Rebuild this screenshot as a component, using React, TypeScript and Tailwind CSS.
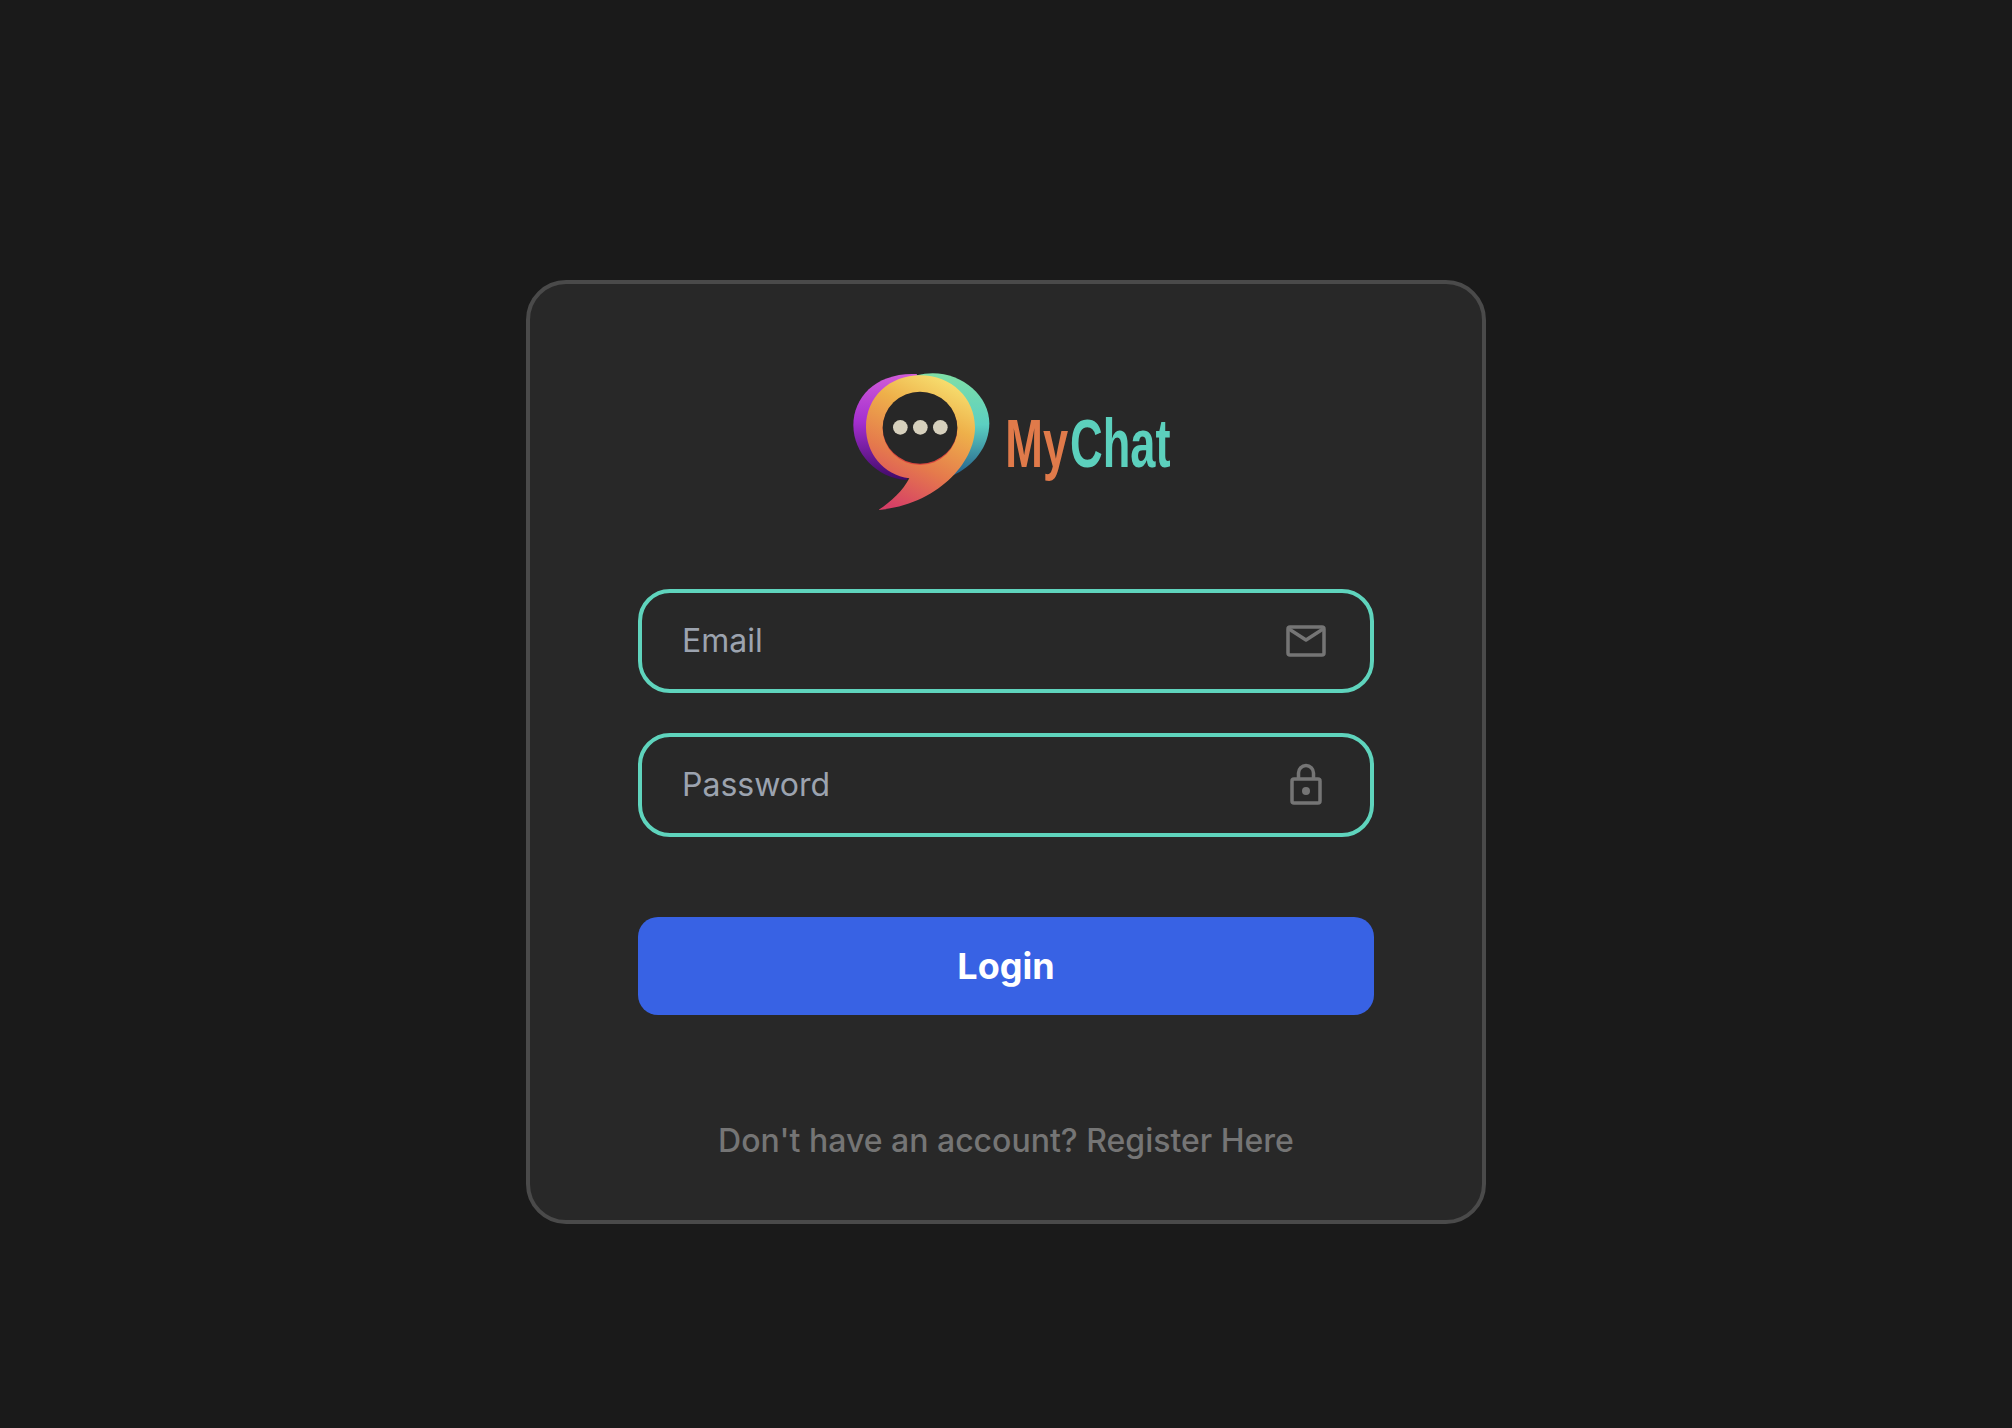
export default function App() {
  return (
    <div className="flex min-h-[1428px] items-start justify-center bg-[#1a1a1a] pt-[280px] font-['Inter',sans-serif]">
      <div className="flex h-[944px] w-[960px] flex-col items-center rounded-[40px] border-4 border-[#4a4a4a] bg-[#282828] pt-[66px]">
        <Logo />
        <form className="mt-[59px] flex w-[736px] flex-col">
          <Field placeholder="Email" type="email" icon={<MailIcon />} />
          <div className="h-10" />
          <Field placeholder="Password" type="password" icon={<LockIcon />} />
          <button
            type="button"
            className="mt-20 h-[98px] w-full rounded-[20px] bg-[#3862e4] text-[36px] font-bold text-white"
          >
            Login
          </button>
        </form>
        <p className="mt-[108px] text-[32px] font-medium leading-[36px] text-[#757575]">
          Don't have an account? Register Here
        </p>
      </div>
    </div>
  );
}

function Field({ placeholder, type, icon }: { placeholder: string; type: string; icon: React.ReactNode }) {
  return (
    <div className="flex h-[104px] items-center rounded-[32px] border-4 border-[#5fd4bd] pl-10 pr-10">
      <input
        type={type}
        placeholder={placeholder}
        className="min-w-0 flex-1 bg-transparent text-[32px] text-white outline-none placeholder:text-[#9ca3af]"
      />
      {icon}
    </div>
  );
}

function MailIcon() {
  return (
    <svg width="48" height="48" viewBox="0 0 48 48" fill="none" stroke="#757575" strokeWidth="3.5" strokeLinejoin="round">
      <rect x="6" y="10" width="36" height="28" rx="2" />
      <path d="M7 12 24 23 41 12" />
    </svg>
  );
}

function LockIcon() {
  return (
    <svg width="48" height="48" viewBox="0 0 48 48" fill="none" stroke="#757575" strokeWidth="3.5" strokeLinejoin="round">
      <rect x="10" y="18" width="28" height="24" rx="2" />
      <path d="M16.5 18v-6a7.5 7.5 0 0 1 15 0v6" />
      <circle cx="24" cy="30" r="4" fill="#757575" stroke="none" />
    </svg>
  );
}

function Logo() {
  return (
    <svg width="380" height="180" viewBox="0 0 1140 540" className="ml-2 shrink-0">
      <defs>
        <linearGradient id="purple" x1="0" y1="0" x2="0" y2="1">
          <stop offset="0" stopColor="#d05cd8" />
          <stop offset="0.45" stopColor="#a52fd0" />
          <stop offset="1" stopColor="#3f0a68" />
        </linearGradient>
        <linearGradient id="teal" x1="0" y1="0" x2="0" y2="1">
          <stop offset="0" stopColor="#7fdfa6" />
          <stop offset="0.5" stopColor="#5cd0c2" />
          <stop offset="1" stopColor="#245f8a" />
        </linearGradient>
        <linearGradient id="nine" x1="0.7" y1="0" x2="0.3" y2="1">
          <stop offset="0" stopColor="#f7e070" />
          <stop offset="0.3" stopColor="#eeb04a" />
          <stop offset="0.65" stopColor="#e57a4c" />
          <stop offset="1" stopColor="#d63f66" />
        </linearGradient>
      </defs>
      <path d="M290 72C170 66 100 140 100 225C100 310 170 385 260 390L340 200Z" fill="url(#purple)" />
      <path d="M290 76C400 46 508 125 508 220C508 290 460 350 395 378L260 200Z" fill="url(#teal)" />
      <path
        d="M138 232C138 140 210 76 300 76C395 76 465 145 465 232C465 340 350 465 175 480C215 455 250 420 268 385C190 375 138 310 138 232Z"
        fill="url(#nine)"
      />
      <ellipse cx="300" cy="236" rx="112" ry="109" fill="#d9463f" />
      <ellipse cx="300" cy="233" rx="112" ry="108" fill="#272727" />
      <circle cx="241" cy="232" r="22" fill="#d6d0bd" />
      <circle cx="301" cy="232" r="22" fill="#d6d0bd" />
      <circle cx="361" cy="232" r="22" fill="#d6d0bd" />
      {/* condensed wordmark, no narrow font around so squeeze it */}
      <g transform="scale(0.665 1)" fontFamily="'Liberation Sans', sans-serif" fontWeight="700" fontSize="204">
        <text x="836" y="352" fill="#e07a4a">
          My
        </text>
        <text x="1128" y="352" fill="#5cd0bd">
          Chat
        </text>
      </g>
    </svg>
  );
}
